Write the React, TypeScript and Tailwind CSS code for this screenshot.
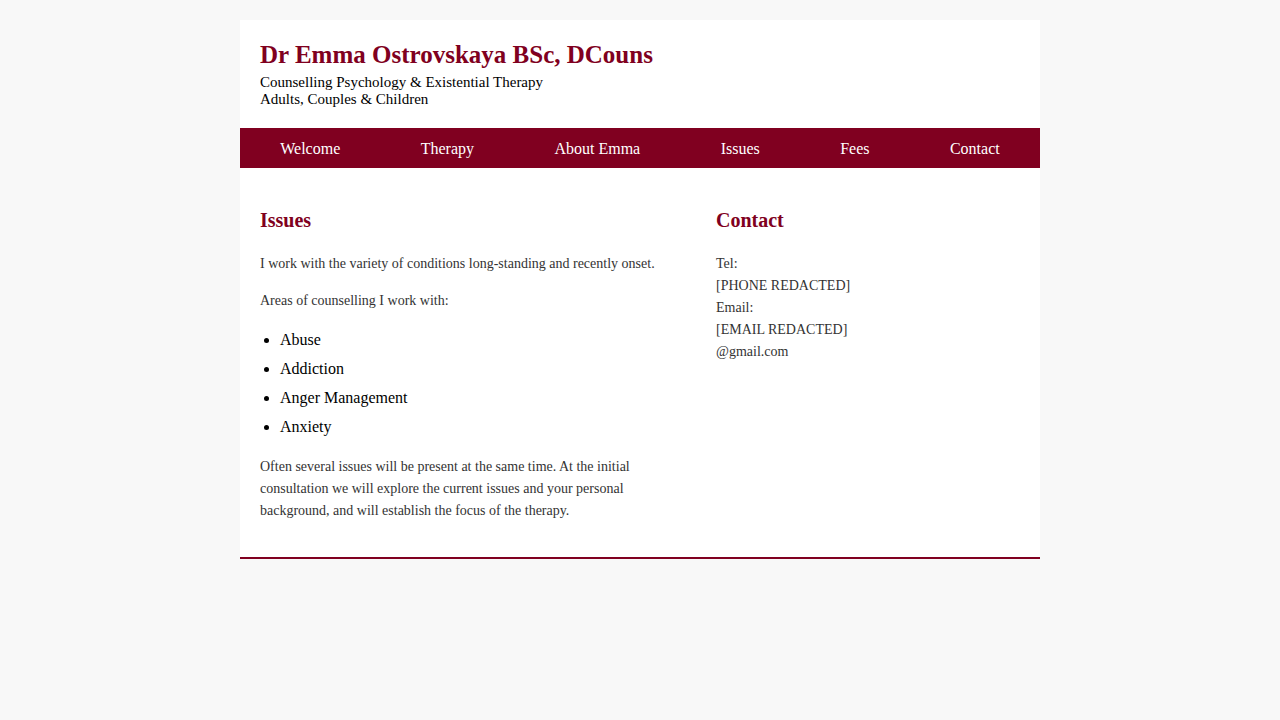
const navItems = [
  { label: "Welcome", href: "#welcome" },
  { label: "Therapy", href: "#therapy" },
  { label: "About Emma", href: "#about" },
  { label: "Issues", href: "#issues" },
  { label: "Fees", href: "#fees" },
  { label: "Contact", href: "#contact" },
];

const areas = ["Abuse", "Addiction", "Anger Management", "Anxiety"];

function Header() {
  return (
    <header className="p-5">
      <h1 className="mb-1 text-[25px] leading-[30px] font-bold text-[#800020]">
        Dr Emma Ostrovskaya BSc, DCouns
      </h1>
      <p className="text-[15px] leading-[17px]">
        Counselling Psychology &amp; Existential Therapy
        <br />
        Adults, Couples &amp; Children
      </p>
    </header>
  );
}

function Nav() {
  return (
    <nav className="bg-[#800020] pt-[11px] pb-[9px]">
      <ul className="flex flex-wrap justify-around">
        {navItems.map((item) => (
          <li key={item.href}>
            <a href={item.href} className="block text-base leading-5 text-white">
              {item.label}
            </a>
          </li>
        ))}
      </ul>
    </nav>
  );
}

function Issues() {
  return (
    <section id="issues" className="w-3/5 pr-10">
      <h2 className="mt-5 mb-[21px] text-xl leading-6 font-bold text-[#800020]">Issues</h2>
      <div className="space-y-[15px] text-sm leading-[22px] text-[#333333]">
        <p>I work with the variety of conditions long-standing and recently onset.</p>
        <p>Areas of counselling I work with:</p>
      </div>
      <ul className="mt-[18px] mb-5 list-disc space-y-[10px] pl-5 text-base leading-[19px]">
        {areas.map((area) => (
          <li key={area}>{area}</li>
        ))}
      </ul>
      <p className="mb-[15px] text-sm leading-[22px] text-[#333333]">
        Often several issues will be present at the same time. At the initial consultation we will
        explore the current issues and your personal background, and will establish the focus of
        the therapy.
      </p>
    </section>
  );
}

function Contact() {
  return (
    <section id="contact" className="w-2/5">
      <h2 className="mt-5 mb-[21px] text-xl leading-6 font-bold text-[#800020]">Contact</h2>
      <p className="text-sm leading-[22px] text-[#333333]">
        Tel:
        <br />
        [PHONE REDACTED]
        <br />
        Email:
        <br />
        [EMAIL REDACTED]
        <br />
        @gmail.com
      </p>
    </section>
  );
}

export default function App() {
  return (
    <div className="min-h-screen bg-[#f8f8f8] py-5 font-['Liberation_Serif',serif] text-black">
      <div className="mx-auto max-w-[800px] border-b-2 border-[#800020] bg-white">
        <Header />
        <Nav />
        <main className="flex p-5">
          <Issues />
          <Contact />
        </main>
      </div>
    </div>
  );
}
